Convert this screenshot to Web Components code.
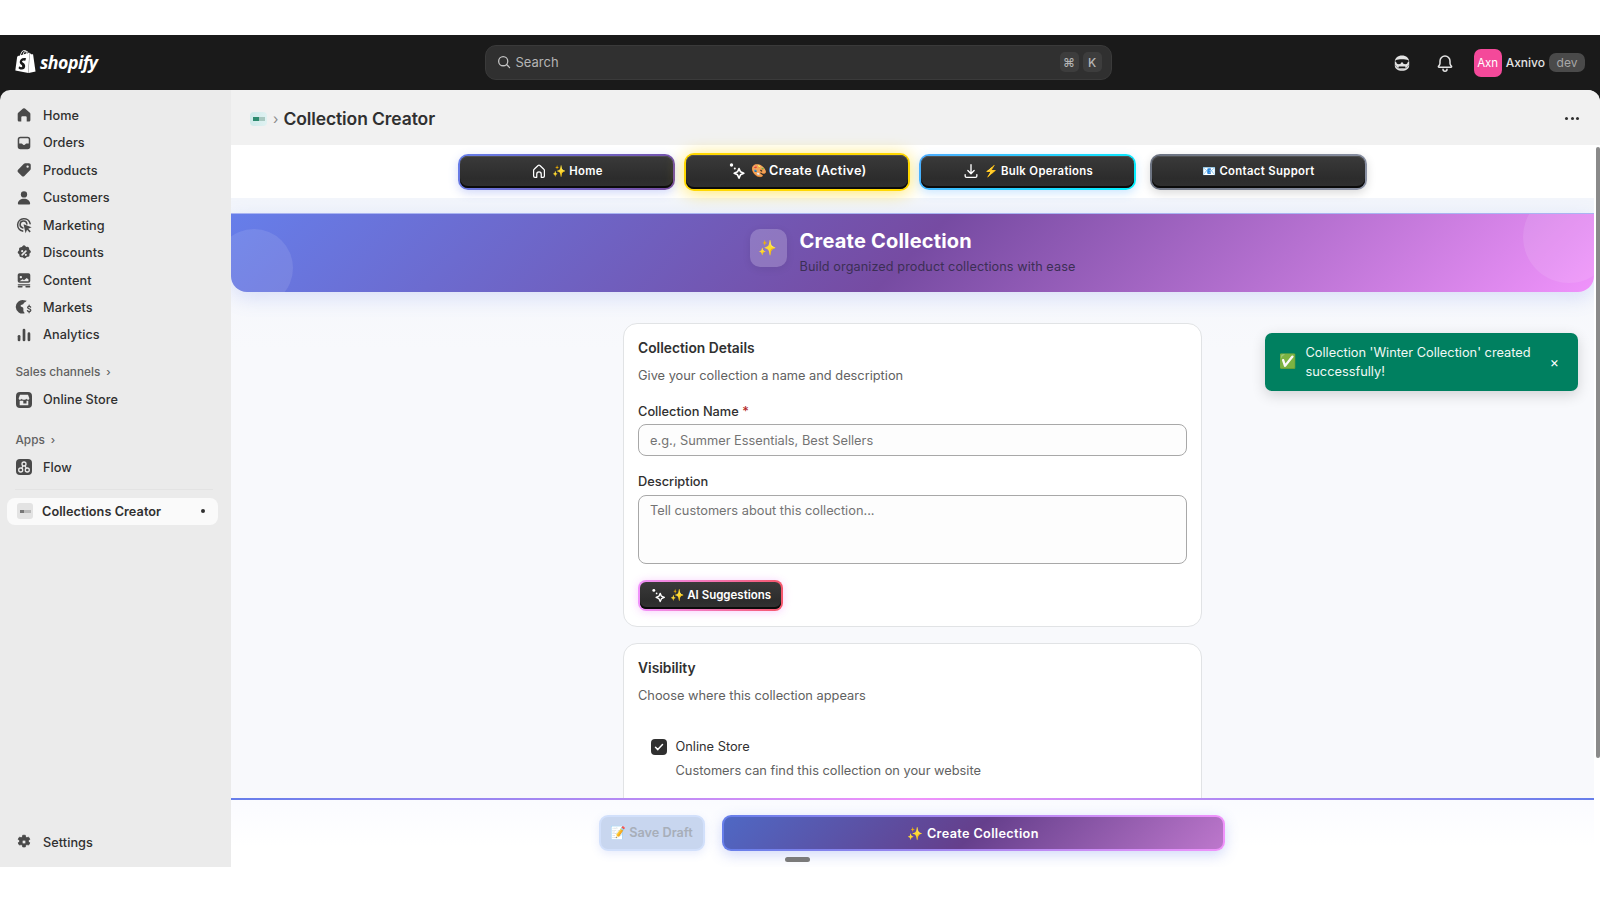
<!DOCTYPE html>
<html lang="en"><head><meta charset="utf-8"><title>Collection Creator</title>
<style>
html,body{margin:0;padding:0;background:#fff;font-family:Inter,"Noto Sans",sans-serif;overflow:hidden}
</style></head><body>
<shop-app></shop-app>
<script>
const ICONS={
home:'<path fill="currentColor" d="M8.900 2.900a1.700 1.700 0 0 1 2.200 0l5.400 4.600c.4.300.6.800.6 1.300v6.700c0 1-.8 1.800-1.800 1.800H13v-4.800a1.200 1.200 0 0 0-1.200-1.200H8.200a1.200 1.200 0 0 0-1.200 1.200v4.800H4.800c-1 0-1.800-.8-1.800-1.800V8.800c0-.5.200-1 .6-1.300z"/>',
orders:'<path fill="currentColor" fill-rule="evenodd" d="M6 3h8a3 3 0 0 1 3 3v8a3 3 0 0 1-3 3H6a3 3 0 0 1-3-3V6a3 3 0 0 1 3-3zM4.700 10v.5h2.600c.5 0 .8.300 1 .7.3.7 1 1.100 1.700 1.100s1.400-.4 1.700-1.100c.2-.4.500-.7 1-.7h2.600V6A1.300 1.300 0 0 0 14 4.700H6A1.300 1.300 0 0 0 4.700 6z"/>',
products:'<path fill="currentColor" d="M11.300 2.500h4.200c1.100 0 2 .9 2 2v4.200c0 .5-.2 1-.6 1.400l-6.500 6.500a2 2 0 0 1-2.800 0l-4.200-4.200a2 2 0 0 1 0-2.800l6.500-6.500c.4-.4.900-.6 1.400-.6zM14 7.500a1.300 1.300 0 1 0 0-2.600 1.300 1.300 0 0 0 0 2.600z"/>',
customers:'<circle fill="currentColor" cx="10" cy="6" r="3.500"/><path fill="currentColor" d="M10 10.800c3.700 0 6.500 2.200 6.800 5 .1.800-.5 1.400-1.200 1.400H4.400c-.7 0-1.300-.6-1.200-1.400.3-2.800 3.100-5 6.800-5z"/>',
marketing:'<g fill="none" stroke="currentColor" stroke-width="1.700" stroke-linecap="round"><path d="M16.800 8.500A7 7 0 1 0 8.500 16.800"/><path d="M13.200 8.800A3.800 3.800 0 1 0 8.800 13.200"/></g><path fill="currentColor" d="M9.500 9.200l9 3.200-3.800 1.700 2.800 2.800-1.300 1.300-2.800-2.800-1.700 3.800z"/>',
discounts:'<path fill="currentColor" fill-rule="evenodd" d="M8.500 2.300a2 2 0 0 1 3 0l.8.9 1.200-.1a2 2 0 0 1 2.200 1.900l.1 1.200.9.800a2 2 0 0 1 .1 3l-.8.900.1 1.200a2 2 0 0 1-1.900 2.200l-1.200.1-.8.900a2 2 0 0 1-3 .1l-.9-.8-1.200.1a2 2 0 0 1-2.200-1.900l-.1-1.200-.9-.8a2 2 0 0 1-.1-3l.8-.9-.1-1.200a2 2 0 0 1 1.900-2.200l1.200-.1zM8 6.800a1.200 1.200 0 1 0 0 2.400 1.200 1.200 0 0 0 0-2.400zm4 4a1.200 1.200 0 1 0 0 2.400 1.200 1.200 0 0 0 0-2.400zm.700-3.500a.9.900 0 0 0-1.300 0l-4.100 4.100a.9.900 0 0 0 1.300 1.300l4.100-4.100a.9.900 0 0 0 0-1.300z"/>',
content:'<path fill="currentColor" fill-rule="evenodd" d="M5 2.500h10a2 2 0 0 1 2 2v6.500a2 2 0 0 1-2 2H5a2 2 0 0 1-2-2V4.500a2 2 0 0 1 2-2zm1.500 3a1.300 1.300 0 1 0 0 2.600 1.300 1.300 0 0 0 0-2.600zM5 11.300h10V9.500l-2-1.800-3 2.500-1.500-1z"/><rect fill="currentColor" x="3" y="14.600" width="14" height="1.500" rx=".7"/><rect fill="currentColor" x="3" y="16.800" width="5.500" height="1.500" rx=".7"/><rect fill="currentColor" x="11.500" y="16.800" width="5.500" height="1.500" rx=".7"/>',
markets:'<path fill="currentColor" d="M10 2.500a7.500 7.500 0 0 1 3 .6c-.6 1-1.500 1.600-2.500 2-.8.400-.7 1.400-1.500 1.900-1 .7-2.200.3-2.700 1.300-.4.900.5 1.600 1.400 1.800 1 .2 1.600.9 1.600 2v2c0 .6.300 1.200.8 1.600.3.300.6.700.7 1.200A7.500 7.500 0 1 1 10 2.500z"/><path fill="none" stroke="currentColor" stroke-width="1.400" stroke-linecap="round" d="M17.400 10.200c-.4-.7-1-1-1.700-1-1 0-1.700.6-1.700 1.400 0 1.800 3.600 1 3.600 2.900 0 .9-.8 1.500-1.900 1.500-.8 0-1.500-.4-1.900-1M15.700 8v1.200M15.700 15v1.300"/>',
analytics:'<rect fill="currentColor" x="3" y="10" width="3" height="7" rx="1.500"/><rect fill="currentColor" x="8.500" y="3" width="3" height="14" rx="1.500"/><rect fill="currentColor" x="14" y="7" width="3" height="10" rx="1.500"/>',
store:'<path fill="currentColor" fill-rule="evenodd" d="M6 2h8a4 4 0 0 1 4 4v8a4 4 0 0 1-4 4H6a4 4 0 0 1-4-4V6a4 4 0 0 1 4-4zM6 4.800 4.700 8.300c0 1 .6 1.500 1.300 1.500s1.300-.4 1.600-1c.3.600 1.200 1 2.400 1s2.100-.4 2.400-1c.3.600.9 1 1.600 1s1.300-.5 1.300-1.500L14 4.800zm-.3 6v4.400h8.600v-4.400h-1.800v2.700H9.300v-2.700z"/>',
flow:'<path fill="currentColor" d="M6 2h8a4 4 0 0 1 4 4v8a4 4 0 0 1-4 4H6a4 4 0 0 1-4-4V6a4 4 0 0 1 4-4z"/><g fill="none" stroke="#ebebeb" stroke-width="1.300"><circle cx="10" cy="7" r="2"/><circle cx="6.700" cy="13" r="2"/><circle cx="13.300" cy="13" r="2"/><path d="M9 8.800 7.700 11.200M11 8.800l1.300 2.400"/></g>',
settings:'<path fill="currentColor" stroke="currentColor" stroke-width=".9" stroke-linejoin="round" fill-rule="evenodd" d="M8.600 2.500h2.800l.5 2 1.200.7 2-.6 1.400 2.400-1.500 1.400v1.200l1.500 1.400-1.400 2.400-2-.6-1.200.7-.5 2H8.600l-.5-2-1.200-.7-2 .6-1.400-2.400 1.500-1.400V8.400L3.500 7l1.400-2.400 2 .6 1.200-.7zM10 7.800a2.200 2.200 0 1 0 0 4.400 2.200 2.200 0 0 0 0-4.400z"/>',
search:'<g fill="none" stroke="currentColor" stroke-width="1.600" stroke-linecap="round"><circle cx="9" cy="9" r="5.700"/><path d="M13.200 13.200 17 17"/></g>',
mask:'<path fill="currentColor" d="M10 2.500c4.200 0 7.200 2.500 7.200 6.300v3.700c0 3.200-3 5.300-7.200 5.300s-7.200-2.100-7.200-5.300V8.800C2.800 5 5.800 2.500 10 2.500z"/><path fill="#1a1a1a" d="M3.500 7.300c1.900-.8 4.100-1 6.500-1s4.600.2 6.500 1l.2 1.500-.9.300c-.2 1.400-1.200 2.200-2.600 2.200s-2.400-.8-2.700-2h-1c-.3 1.200-1.300 2-2.700 2s-2.400-.8-2.600-2.200l-.9-.3z"/><rect fill="#1a1a1a" x="6.500" y="13.400" width="7" height="1.500" rx=".7"/><path fill="none" stroke="#1a1a1a" d="M3.300 11.800c1 2.800 3.300 4 6.700 4s5.700-1.200 6.700-4" opacity=".4"/>',
bell:'<g fill="none" stroke="currentColor" stroke-width="1.500" stroke-linejoin="round" stroke-linecap="round"><path d="M10 3a5 5 0 0 0-5 5v2.300c0 .8-.3 1.500-.8 2.100l-.7.900c-.3.400 0 .9.500.9h12c.5 0 .8-.5.500-.9l-.7-.9c-.5-.6-.8-1.300-.8-2.100V8a5 5 0 0 0-5-5z"/><path d="M8 16.300a2 2 0 0 0 4 0"/></g>',
homeo:'<path fill="none" stroke="currentColor" stroke-width="1.400" stroke-linejoin="round" d="M7.500 17H5.500A1.500 1.500 0 0 1 4 15.500V9.200c0-.5.200-.9.600-1.200l4.400-4.100c.6-.5 1.400-.5 2 0l4.400 4.100c.4.300.6.700.6 1.200v6.300a1.500 1.500 0 0 1-1.500 1.500h-2v-3.500a2.500 2.500 0 0 0-5 0z"/>',
magic:'<path fill="none" stroke="currentColor" stroke-width="1.600" stroke-linejoin="round" d="M12 7.500l1.500 3.300 3.300 1.500-3.300 1.500-1.500 3.300-1.500-3.300-3.300-1.500 3.300-1.500z"/><circle fill="currentColor" cx="4.500" cy="4" r="1.700"/><circle fill="currentColor" cx="7.800" cy="7.500" r="1"/>',
down:'<g fill="none" stroke="currentColor" stroke-width="1.500" stroke-linecap="round" stroke-linejoin="round"><path d="M10 3v9.500M6.500 9.500l3.500 3.500 3.500-3.500M3.500 14v1.500c0 .8.700 1.500 1.500 1.500h10c.8 0 1.500-.7 1.500-1.500V14"/></g>'
};
function icon(n,s=20){return `<svg width="${s}" height="${s}" viewBox="0 0 20 20" aria-hidden="true" style="display:block;flex:none">${ICONS[n]}</svg>`}
const E='"Noto Color Emoji","Apple Color Emoji"';
function def(name,css,html){
  customElements.define(name,class extends HTMLElement{
    constructor(){super();const r=this.attachShadow({mode:'open'});
      r.innerHTML=`<style>${css}</style>`+(typeof html==='function'?html(this):html);}
  });
}
def('top-bar',`
:host{display:flex;align-items:center;height:55px;background:#1a1a1a;position:relative;color:#e3e3e3;font-size:13px}
.logo{display:flex;align-items:center;gap:3px;margin-left:14px;width:470.500px;flex:none;padding-bottom:2px;box-sizing:border-box}
.logo b{font:italic 700 17.700px "Open Sans",sans-serif;color:#fff;letter-spacing:-.5px}
.search{width:627px;height:35px;box-sizing:border-box;background:#303030;border:1px solid #3a3a3a;border-radius:11px;display:flex;align-items:center;padding:0 9px 1px 10px;gap:4px;color:#c4c4c4;flex:none}
.search span{flex:1;font-size:13px;color:#b5b5b5}
kbd{font:500 12px Inter,"DejaVu Sans",sans-serif;background:#3d3d3d;color:#b5b5b5;height:20px;width:19px;display:grid;place-items:center;border-radius:5px}
.right{margin-left:auto;display:flex;align-items:center;padding-right:15px}
.right svg{color:#e3e3e3}
.av{width:28px;height:28px;background:#f4499a;border-radius:7px;display:grid;place-items:center;color:#fff;font-size:11.500px;margin-left:19px}
.nm{margin:0 4px 0 4px;font-size:12px;font-weight:500;color:#e3e3e3}
.dev{background:#4a4a4a;color:#a8a8a8;font-size:12px;width:36px;height:19px;border-radius:7px;display:grid;place-items:center}
`,`<div class="logo"><svg width="23" height="23" viewBox="0 0 24 24" aria-hidden="true"><path fill="#fff" d="M15.337 23.979l7.216-1.561s-2.604-17.613-2.625-17.73c-.018-.116-.114-.192-.211-.192s-1.929-.136-1.929-.136-1.275-1.274-1.439-1.411c-.045-.037-.075-.057-.121-.074l-.914 21.104h.023zM11.71 11.305s-.81-.424-1.774-.424c-1.447 0-1.504.906-1.504 1.141 0 1.232 3.24 1.715 3.24 4.629 0 2.295-1.44 3.76-3.406 3.76-2.354 0-3.54-1.465-3.54-1.465l.646-2.086s1.245 1.066 2.28 1.066c.675 0 .975-.545.975-.932 0-1.619-2.654-1.694-2.654-4.359-.034-2.237 1.571-4.416 4.827-4.416 1.257 0 1.875.361 1.875.361l-.945 2.715-.02.01zM11.17.83c.136 0 .271.038.405.135-.984.465-2.064 1.639-2.508 3.992-.656.213-1.293.405-1.889.578C7.697 3.75 8.951.84 11.17.84V.83zm1.235 2.949v.135c-.754.232-1.583.484-2.394.736.466-1.777 1.333-2.645 2.085-2.971.193.501.309 1.176.309 2.1zm.539-2.234c.694.074 1.141.867 1.429 1.755-.349.114-.735.231-1.158.366v-.252c0-.752-.096-1.371-.271-1.871v.002zm2.992 1.289c-.02 0-.06.021-.078.021s-.289.075-.714.21c-.423-1.233-1.176-2.37-2.508-2.37h-.115C12.135.209 11.669 0 11.265 0 8.159 0 6.675 3.877 6.21 5.846c-1.194.365-2.063.636-2.16.674-.675.213-.694.232-.772.87-.075.462-1.83 14.063-1.83 14.063L15.009 24l.927-21.166z"/></svg><b>shopify</b></div>
<div class="search">${icon('search',16)}<span>Search</span><kbd>⌘</kbd><kbd>K</kbd></div>
<div class="right">${icon('mask',20)}<span style="width:23px"></span>${icon('bell',20)}<div class="av">Axn</div><span class="nm">Axnivo</span><span class="dev">dev</span></div>`);

def('nav-item',`
:host{display:flex;align-items:center;height:27.450px;font-size:12.700px;font-weight:500;color:#303030;gap:10px;padding-left:15px;letter-spacing:.05px}
svg{color:#4a4a4a}
.w{width:18px;height:18px;display:grid;place-items:center;flex:none}
.w svg{margin:-1px}
:host([active]){background:#fafafa;border-radius:8px;margin:0 13px 0 7px;padding-left:10px;font-weight:600;position:relative}
.d{margin-left:auto;margin-right:13px;width:4px;height:4px;border-radius:50%;background:#303030}
.th{width:16px;height:16px;border-radius:3px;background:#e3e3e3;display:grid;place-items:center;flex:none;margin-right:-1px}
.th i{display:block;width:11px;height:3px;background:linear-gradient(90deg,#777 40%,#bbb 40%)}
`,h=>{const n=h.getAttribute('icon');
 return (n?`<span class="w">${icon(n,h.hasAttribute('large')?20:18)}</span>`:'<span class="th"><i></i></span>')+'<slot></slot>'+(h.hasAttribute('active')?'<span class="d"></span>':'')});

def('nav-label',`
:host{display:flex;align-items:center;height:27px;padding-left:15.500px;font-size:11.800px;font-weight:500;color:#616161;gap:6px}
i{font-style:normal;font-size:11px}
`,`<slot></slot><i>›</i>`);

def('side-nav',`
:host{display:flex;flex-direction:column;width:231px;flex:none;background:#ebebeb;border-top-left-radius:10px;padding:11.700px 0 11px;box-sizing:border-box}
.sp{flex:1}
hr{border:0;border-top:1px solid #e3e3e3;margin:7.500px 18px 8px 15px}
`,`<nav-item icon="home">Home</nav-item><nav-item icon="orders">Orders</nav-item><nav-item icon="products">Products</nav-item><nav-item icon="customers">Customers</nav-item><nav-item icon="marketing">Marketing</nav-item><nav-item icon="discounts">Discounts</nav-item><nav-item icon="content">Content</nav-item><nav-item icon="markets">Markets</nav-item><nav-item icon="analytics">Analytics</nav-item>
<nav-label style="margin-top:9.700px;height:27.500px">Sales channels</nav-label><nav-item icon="store" large>Online Store</nav-item>
<nav-label style="margin-top:13.500px">Apps</nav-label><nav-item icon="flow" large>Flow</nav-item>
<hr><nav-item active>Collections Creator</nav-item><div class="sp"></div><nav-item icon="settings">Settings</nav-item>`);

def('page-header',`
:host{display:flex;align-items:center;height:55px;box-sizing:border-box;padding:2px 21px 0 19px;background:#f1f1f1;flex:none;color:#303030}
.lg{width:17px;height:14px;border-radius:4px;background:linear-gradient(90deg,#cfeaea,#e0f2f2);display:grid;place-items:center}
.lg i{display:block;width:12px;height:4px;background:linear-gradient(90deg,#2e8b6f 50%,#a8c8c0 50%)}
.c{margin:0 5px 0 6px;color:#8a8a8a;font-size:14px}
h1{margin:0;font-size:17.500px;font-weight:600;flex:1;letter-spacing:-.1px}
.dots{display:flex;gap:2.500px}.dots i{width:3px;height:3px;border-radius:50%;background:#303030}
`,`<span class="lg"><i></i></span><span class="c">›</span><h1>Collection Creator</h1><span class="dots"><i></i><i></i><i></i></span>`);

def('tab-button',`
:host{display:block;box-sizing:border-box;width:217px;height:36px;padding:2px;border-radius:10px;background:var(--ring,#6b7280);box-shadow:0 3px 10px var(--glow,rgba(0,0,0,.15))}
.in{height:100%;box-sizing:border-box;border-radius:8px;background:linear-gradient(180deg,#3a3a3a,#2c2c2c 70%,#303030);box-shadow:inset 0 -2px 0 #0b0b0b,inset 0 1px 0 #505050;display:flex;align-items:center;justify-content:center;gap:4px;color:#fff;font:600 var(--fs,11.300px) Inter,${E},sans-serif;letter-spacing:var(--ls,.35px);padding-bottom:2px}
.em{margin-right:-1px;letter-spacing:0}
:host([big]){width:226px;height:38px;--fs:12.700px;--ls:.35px;box-shadow:0 2px 18px rgba(255,215,0,.6)}
:host([big]) .em{margin-right:-2px}
svg{color:#fff}
`,h=>`<div class="in">${h.getAttribute('icon')?icon(h.getAttribute('icon'),h.hasAttribute('big')?20:18):''}<span class="em">${h.getAttribute('emoji')}</span><slot></slot></div>`);

def('nav-band',`
:host{display:flex;justify-content:center;align-items:center;height:53px;background:#fff;gap:9px;flex:none;position:relative;z-index:1}
`,`<tab-button emoji="✨" icon="homeo" style="--ring:linear-gradient(135deg,#667eea,#764ba2);--glow:rgba(102,126,234,.3)">Home</tab-button>
<tab-button emoji="🎨" big icon="magic" style="--ring:#ffd700">Create (Active)</tab-button>
<tab-button emoji="⚡" icon="down" style="--ring:linear-gradient(135deg,#4facfe,#00f2fe);--glow:rgba(79,172,254,.3)">Bulk Operations</tab-button>
<tab-button emoji="📧" style="--ring:linear-gradient(135deg,#6b7280,#8b92a5);margin-left:5px">Contact Support</tab-button>`);

def('hero-banner',`
:host{display:flex;align-items:center;justify-content:center;gap:13px;height:79px;box-sizing:border-box;margin-top:15px;border-radius:0 0 16px 16px;background:linear-gradient(135deg,#667eea 0%,#764ba2 50%,#f093fb 100%);box-shadow:0 6px 20px rgba(102,126,234,.2);position:relative;overflow:hidden;flex:none;border-top:1px solid #a9b4f2}
.c1,.c2{position:absolute;border-radius:50%;background:rgba(255,255,255,.1)}
.c1{width:78px;height:78px;left:-16px;top:15px}
.c2{width:92px;height:92px;right:-21px;top:-23px}
.ic{width:37px;height:38px;border-radius:10px;background:rgba(255,255,255,.2);display:grid;place-items:center;font:15px ${E},sans-serif;color:#ffd83d;box-shadow:0 2px 8px rgba(0,0,0,.08);margin-bottom:10px}
h2{margin:0;font-size:20px;font-weight:700;color:#fff;line-height:24px;letter-spacing:.2px}
p{margin:4px 0 0;font-size:12.650px;color:#3c2f55;line-height:20px;letter-spacing:.1px}
`,`<span class="c1"></span><span class="c2"></span><span class="ic">✨</span><div><h2>Create Collection</h2><p>Build organized product collections with ease</p></div>`);

def('form-card',`
:host{display:block;background:#fff;border:1px solid #e1e3e5;border-radius:14px;padding:14px 14px 15px;flex:none}
h3{margin:0;font-size:13.800px;font-weight:600;color:#303030;line-height:20px}
p{margin:8px 0 0;font-size:12.800px;color:#616161;line-height:20px}
`,h=>`<h3>${h.getAttribute('heading')}</h3><p>${h.getAttribute('sub')}</p><slot></slot>`);

def('text-field',`
:host{display:block;margin-top:var(--mt,15px);font-size:12.800px;color:#303030}
label{display:block;line-height:20px;margin-bottom:var(--lb,3px);font-weight:450}
label i{font-style:normal;color:#b3261e}
.box{box-sizing:border-box;height:var(--h,32px);background:#fdfdfd;border:1px solid #a8a8a8;border-radius:8px;padding:var(--pt,6px) 11px 0;color:#737373;line-height:18px}
`,h=>`<label>${h.getAttribute('label')}${h.hasAttribute('required')?' <i>*</i>':''}</label><div class="box" role="textbox">${h.getAttribute('placeholder')}</div>`);

def('ai-button',`
:host{display:inline-block;box-sizing:border-box;width:145px;height:31px;padding:2px;border-radius:8px;background:linear-gradient(90deg,#f093fb,#f5576c);box-shadow:0 1px 8px rgba(240,147,251,.45);margin-top:16px;vertical-align:top}
.in{height:100%;box-sizing:border-box;border-radius:6px;background:linear-gradient(180deg,#3a3a3a,#2c2c2c 70%,#333);box-shadow:inset 0 -2px 0 #0b0b0b;display:flex;align-items:center;justify-content:center;gap:3px;color:#fff;font:600 11.500px Inter,${E},sans-serif;padding-bottom:1px}
`,`<div class="in">${icon('magic',17)}<span>✨</span><slot></slot></div>`);

def('check-row',`
:host{display:grid;grid-template-columns:16px 1fr;column-gap:8.500px;margin:29px 0 0 13px;font-size:12.800px;color:#303030;line-height:24px}
.b{width:16px;height:16px;border-radius:4px;background:#303030;display:grid;place-items:center;align-self:center}
.s{grid-column:2;color:#616161}
`,h=>`<span class="b"><svg width="10" height="10" viewBox="0 0 10 10"><path d="M1.500 5.300l2.300 2.300 4.700-5" fill="none" stroke="#fff" stroke-width="1.500" stroke-linecap="round" stroke-linejoin="round"/></svg></span><span>${h.getAttribute('label')}</span><span class="s">${h.getAttribute('help')}</span>`);

def('success-toast',`
:host{position:absolute;left:1033.500px;top:188px;width:313.500px;height:58px;box-sizing:border-box;background:#008060;border-radius:7px;color:#f1f8f5;font-size:12.800px;line-height:19.500px;display:flex;align-items:center;padding:0 19px 0 15px;gap:10px;box-shadow:0 4px 14px rgba(0,0,0,.16)}
.e{font:14px ${E},sans-serif;flex:none;width:16px;padding-bottom:2px}
.t{flex:1}
.x{font-size:14px;color:#fff}
`,`<span class="e">✅</span><span class="t"><slot></slot></span><span class="x">×</span>`);

def('action-footer',`
:host{display:flex;justify-content:center;gap:17px;height:69px;box-sizing:border-box;padding:15px 2px 0 0;background:linear-gradient(180deg,#fafbff,#fff 70%);border-top:2px solid;border-image:linear-gradient(90deg,#667eea,#f093fb 50%,#667eea) 1;flex:none;position:relative;z-index:1}
.b{height:36px;box-sizing:border-box;border-radius:9px;display:flex;align-items:center;justify-content:center;font:600 12.700px Inter,${E},sans-serif}
.s{width:106px;background:#c8d6ef;border:2px solid #d2e0fb;color:#a7aeb9;box-shadow:0 3px 8px rgba(102,126,234,.15);padding-bottom:2px}
.c{width:503px;border:2px solid;color:#fff;letter-spacing:.35px;background:linear-gradient(135deg,#4f68c4 0%,#653f8c 50%,#bd77cc 100%) padding-box,linear-gradient(90deg,#667eea,#f093fb) border-box;border-color:transparent;box-shadow:0 4px 14px rgba(102,126,234,.3)}
`,`<div class="b s">📝 Save Draft</div><div class="b c">✨ Create Collection</div>`);

def('shop-app',`
:host{display:flex;flex-direction:column;height:900px;padding-top:35px;box-sizing:border-box;position:relative;overflow:hidden;background:#fff}
.body{display:flex;height:777px;background:#1a1a1a;flex:none}
.main{flex:1;display:flex;flex-direction:column;background:#f1f1f1;border-top-right-radius:12px;overflow:hidden;min-width:0}
.view{flex:1;display:flex;min-height:0;background:#f7f9fc;position:relative}
.col{flex:1;display:flex;flex-direction:column;min-width:0}
.scroll{flex:1;min-height:0;overflow:hidden;background:linear-gradient(180deg,#f2f5fb,#f8f9fc 25%);display:flex;flex-direction:column}
.form{width:579px;margin:31px 0 0 392px;display:flex;flex-direction:column;gap:16px;flex:none}
.bar{width:6px;background:#fff;flex:none;padding-left:2px;box-sizing:border-box}
.thumb{height:611px;background:#8a8a8a;margin-top:2px;border-radius:2px}
.grab{position:absolute;left:785px;top:857px;width:25px;height:5px;border-radius:3px;background:#7a7a7a;z-index:2}
`,`<top-bar></top-bar><div class="body"><side-nav></side-nav><div class="main"><page-header></page-header>
<div class="view"><div class="col"><nav-band></nav-band><div class="scroll"><hero-banner></hero-banner><div class="form">
<form-card heading="Collection Details" sub="Give your collection a name and description"><text-field label="Collection Name" required placeholder="e.g., Summer Essentials, Best Sellers" style="--mt:16px;--lb:2px;--pt:7px"></text-field><text-field label="Description" placeholder="Tell customers about this collection..." style="--h:69px;--mt:16px"></text-field><ai-button>AI Suggestions</ai-button></form-card>
<form-card heading="Visibility" sub="Choose where this collection appears" style="min-height:260px"><check-row label="Online Store" help="Customers can find this collection on your website"></check-row></form-card>
</div></div><action-footer></action-footer></div><div class="bar"><div class="thumb"></div></div><success-toast>Collection 'Winter Collection' created successfully!</success-toast></div></div></div><div class="grab"></div>`);
</script></body></html>
